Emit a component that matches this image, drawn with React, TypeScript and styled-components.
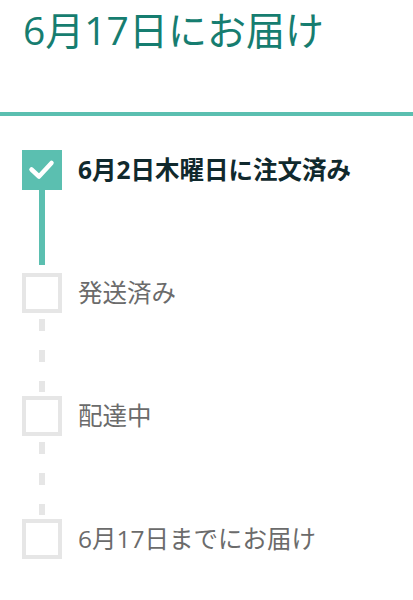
import React from 'react';
import styled, { createGlobalStyle } from 'styled-components';

const GlobalStyle = createGlobalStyle`
  html, body {
    margin: 0;
    padding: 0;
    background: #ffffff;
  }
  body {
    font-family: "Open Sans", "Noto Sans CJK JP", sans-serif;
  }
`;

const Page = styled.div`
  width: 413px;
  min-height: 600px;
  background: #ffffff;
`;

const Header = styled.header`
  padding: 6px 0 0 23px;
  height: 106px;
  border-bottom: 4px solid #5bbfb0;
  box-sizing: content-box;
`;

const Title = styled.h1`
  margin: 0;
  font-size: 39px;
  line-height: 48px;
  font-weight: 400;
  color: #167d70;
`;

const Steps = styled.ol`
  list-style: none;
  margin: 0;
  padding: 34px 0 0 22px;
`;

const Step = styled.li`
  display: flex;
  align-items: flex-start;
  gap: 16px;
`;

const Marker = styled.div`
  display: flex;
  flex-direction: column;
  align-items: center;
  width: 40px;
  flex: 0 0 40px;
`;

const Box = styled.div<{ $done?: boolean }>`
  width: 40px;
  height: 40px;
  box-sizing: border-box;
  display: flex;
  align-items: center;
  justify-content: center;
  background: ${(p) => (p.$done ? '#5bbfb0' : '#ffffff')};
  border: ${(p) => (p.$done ? 'none' : '4px solid #e6e6e6')};
`;

const Connector = styled.div<{ $done?: boolean }>`
  width: 6px;
  height: 83px;
  box-sizing: border-box;
  background-clip: content-box;
  ${(p) =>
    p.$done
      ? `
    padding-bottom: 8px;
    background-color: #5bbfb0;
  `
      : `
    padding: 6px 0 4px;
    background-image: repeating-linear-gradient(
      to bottom,
      #e6e6e6 0,
      #e6e6e6 12px,
      transparent 12px,
      transparent 31px
    );
    background-origin: content-box;
  `}
`;

const Label = styled.span<{ $done?: boolean }>`
  font-size: 24.5px;
  line-height: 40px;
  font-weight: ${(p) => (p.$done ? 700 : 400)};
  color: ${(p) => (p.$done ? '#10292d' : '#6b6b6b')};
`;

const Check = () => (
  <svg width="40" height="40" viewBox="0 0 40 40">
    <polyline
      points="9.5,19.5 17,26.5 29.5,13"
      fill="none"
      stroke="#ffffff"
      strokeWidth="4.5"
      strokeLinecap="round"
      strokeLinejoin="round"
    />
  </svg>
);

const steps = [
  { label: '6月2日木曜日に注文済み', done: true },
  { label: '発送済み', done: false },
  { label: '配達中', done: false },
  { label: '6月17日までにお届け', done: false },
];

export default function App() {
  return (
    <Page>
      <GlobalStyle />
      <Header>
        <Title>6月17日にお届け</Title>
      </Header>
      <Steps>
        {steps.map((s, i) => (
          <Step key={s.label}>
            <Marker>
              <Box $done={s.done}>{s.done && <Check />}</Box>
              {i < steps.length - 1 && <Connector $done={s.done} />}
            </Marker>
            <Label $done={s.done}>{s.label}</Label>
          </Step>
        ))}
      </Steps>
    </Page>
  );
}
